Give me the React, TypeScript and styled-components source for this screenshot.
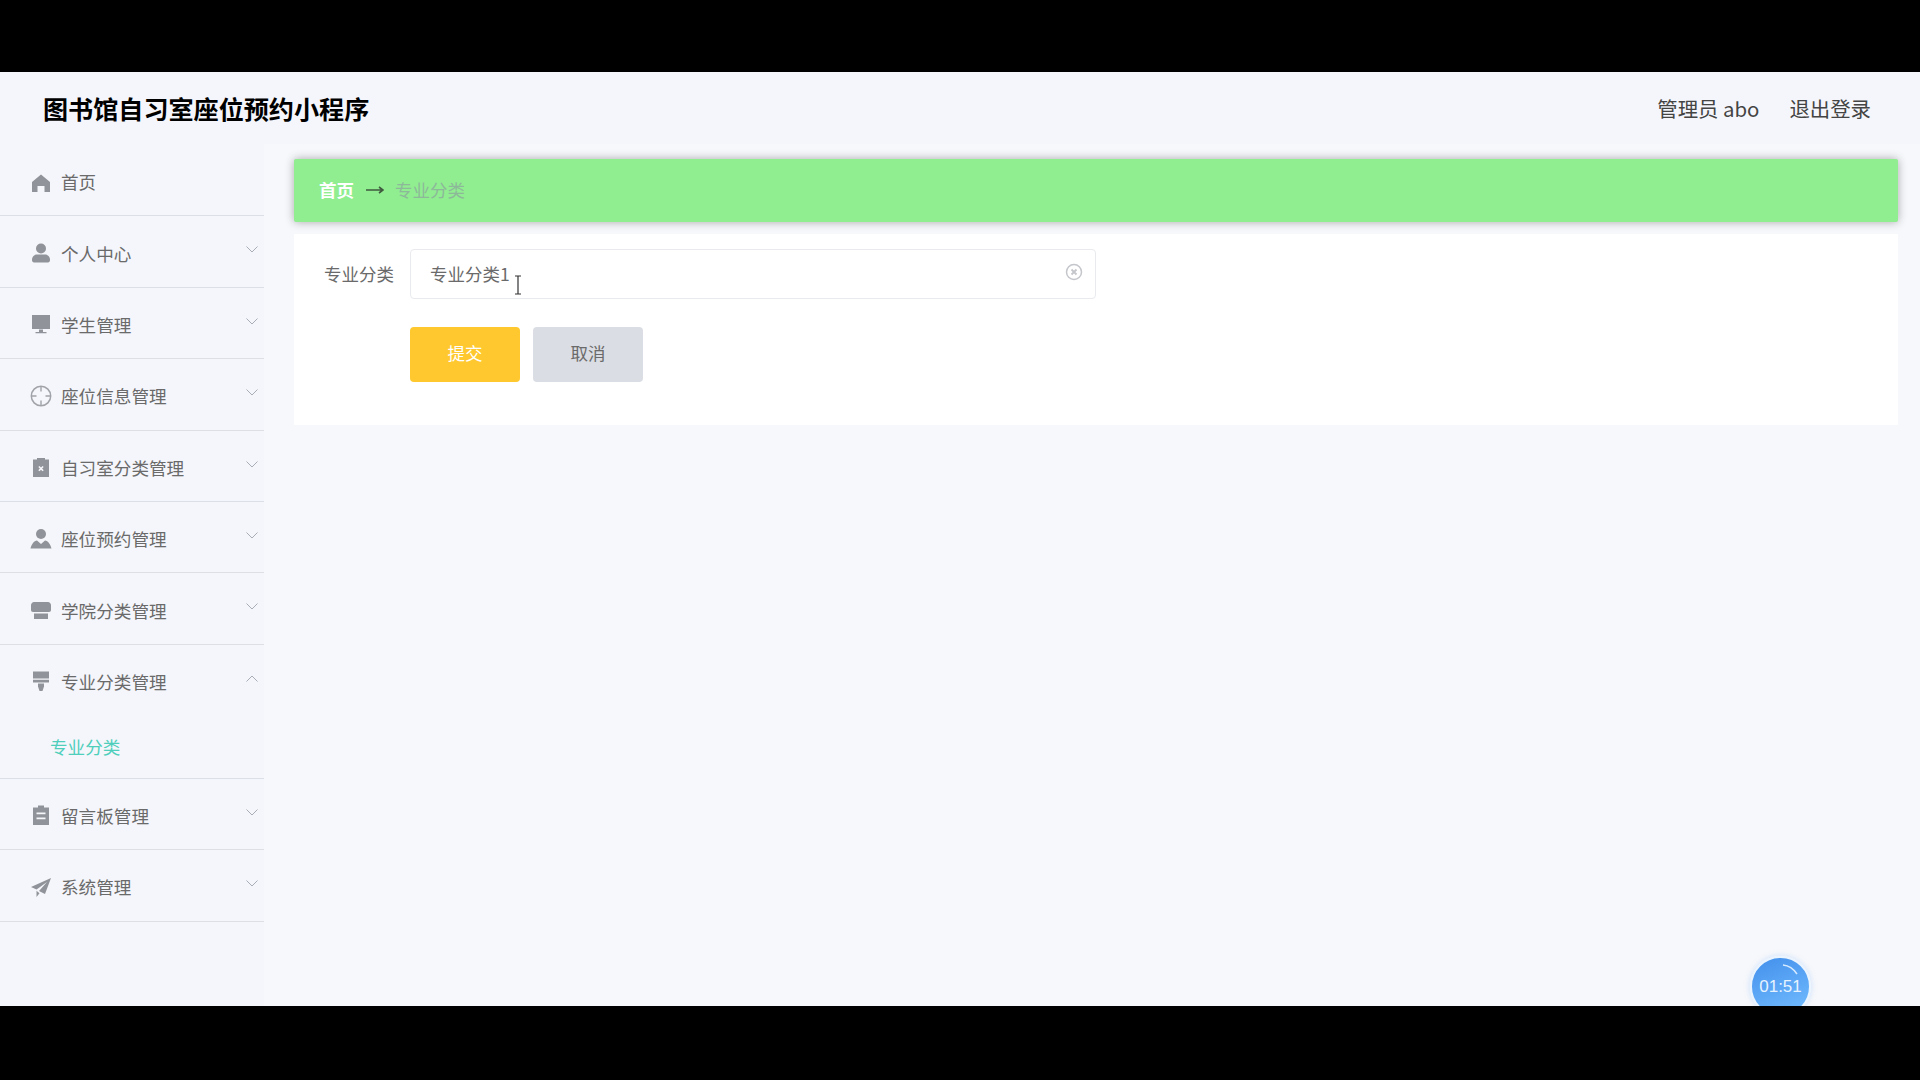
import React from "react";
import styled, { createGlobalStyle } from "styled-components";

const GlobalStyle = createGlobalStyle`
  html, body {
    margin: 0;
    padding: 0;
    background: #000;
  }
  body {
    font-family: "Noto Sans CJK SC", "Liberation Sans", sans-serif;
  }
`;

const Screen = styled.div`
  width: 1920px;
  height: 1080px;
  background: #000;
  overflow: hidden;
  display: flex;
  flex-direction: column;
  padding: 72px 0 74px;
  box-sizing: border-box;
`;

const Page = styled.div`
  position: relative;
  flex: 1;
  overflow: hidden;
  background: #f5f6fb;
`;

const Header = styled.header`
  height: 72px;
  display: flex;
  align-items: center;
  justify-content: space-between;
  padding: 0 49px 0 43px;
  box-sizing: border-box;
`;

const Title = styled.h1`
  margin: 0;
  font-size: 25.1px;
  font-weight: 700;
  color: #000;
`;

const UserBar = styled.div`
  display: flex;
  gap: 30px;
  font-size: 20.4px;
  color: #444;
`;

const Body = styled.div`
  display: flex;
  height: 862px;
`;

const Sidebar = styled.nav`
  width: 264px;
  flex: none;
  padding-top: 1px;
`;

const Row = styled.div`
  height: 71.4px;
  box-sizing: border-box;
  border-bottom: 1.5px solid #dcdfe6;
  display: flex;
  align-items: center;
  padding: 3px 0 0 30px;
  position: relative;
`;

const IconBox = styled.span`
  width: 22px;
  height: 22px;
  margin-right: 9px;
  flex: none;
  display: flex;
  align-items: center;
  justify-content: center;
  svg {
    display: block;
    width: 22px;
    height: 22px;
    fill: #909399;
  }
`;

const RowLabel = styled.span`
  font-size: 17.6px;
  color: #6a6a6a;
`;

const Chevron = styled.svg<{ $open?: boolean }>`
  position: absolute;
  right: 6px;
  top: 30px;
  width: 12px;
  height: 7px;
  fill: none;
  stroke: #a9adb5;
  stroke-width: 1;
  transform: ${(props) => (props.$open ? "rotate(180deg)" : "none")};
`;

const Group = styled.div`
  border-bottom: 1.5px solid #dcdfe6;
  height: 134px;
  box-sizing: border-box;
`;

const GroupHead = styled(Row)`
  border-bottom: none;
  height: 70px;
`;

const SubItem = styled.div`
  height: 62px;
  padding: 1px 0 0 50px;
  box-sizing: border-box;
  display: flex;
  align-items: center;
  font-size: 17.6px;
  color: #4fcfbb;
`;

const Main = styled.main`
  flex: 1;
  background: #f7f8fb;
  padding: 15px 22px 0 30px;
`;

const Crumbs = styled.div`
  height: 63px;
  background: #90ee90;
  border-radius: 2px;
  box-shadow: 0 0 10px rgba(0, 0, 0, 0.32);
  display: flex;
  align-items: center;
  padding: 0 0 2px 25px;
  box-sizing: border-box;
  font-size: 17.5px;
`;

const CrumbHome = styled.span`
  color: #fff;
  font-weight: 700;
`;

const CrumbArrow = styled.svg`
  width: 18px;
  height: 10px;
  margin: 0 11px 0 12px;
  fill: none;
  stroke: #3f5a3f;
  stroke-width: 1.6;
`;

const CrumbCurrent = styled.span`
  color: #8db89a;
`;

const Card = styled.section`
  margin-top: 12px;
  height: 191px;
  background: #fff;
  padding: 15px 30px 0;
  box-sizing: border-box;
`;

const FormRow = styled.div`
  display: flex;
  align-items: center;
`;

const FormLabel = styled.label`
  width: 86px;
  flex: none;
  padding-bottom: 1px;
  font-size: 17.5px;
  color: #6a6a6a;
`;

const Field = styled.div`
  position: relative;
  width: 686px;
  height: 50px;
`;

const FieldInput = styled.input`
  width: 100%;
  height: 100%;
  box-sizing: border-box;
  border: 1.5px solid #e8eaee;
  border-radius: 4px;
  padding: 0 40px 2px 19px;
  font-family: inherit;
  font-size: 17.5px;
  color: #6a6a6a;
  background: #fff;
  outline: none;
`;

const ClearIcon = styled.svg`
  position: absolute;
  right: 13px;
  top: 14px;
  width: 18px;
  height: 18px;
  fill: none;
  stroke: #c4c6cb;
`;

const TextCursor = styled.svg`
  position: absolute;
  left: 103px;
  top: 26px;
  width: 10px;
  height: 20px;
  fill: none;
  stroke: #333;
  stroke-width: 1.2;
`;

const Actions = styled.div`
  display: flex;
  gap: 13px;
  margin: 28px 0 0 86px;
`;

const Button = styled.button<{ $primary?: boolean }>`
  width: 110px;
  height: 55px;
  border: none;
  border-radius: 4px;
  padding: 0 0 4px;
  font-family: inherit;
  font-size: 17.5px;
  background: ${(props) => (props.$primary ? "#fec82e" : "#dadde3")};
  color: ${(props) => (props.$primary ? "#fff" : "#6a6a6a")};
`;

const Timer = styled.div`
  position: absolute;
  left: 1750px;
  top: 884px;
  width: 61px;
  height: 61px;
  box-sizing: border-box;
  border-radius: 50%;
  border: 2px solid #eaf4ff;
  background: linear-gradient(160deg, #4390ec, #74bdff);
  color: #e6f3ff;
  font-family: "Liberation Sans", sans-serif;
  font-size: 17px;
  display: flex;
  align-items: center;
  justify-content: center;
  box-shadow: 0 0 6px rgba(120, 180, 255, 0.35);
`;

const TimerGlint = styled.svg`
  position: absolute;
  left: 30px;
  top: 6px;
  width: 18px;
  height: 12px;
  fill: none;
  stroke: #d7ebff;
  stroke-width: 1.5;
`;

const HomeIcon = () => (
  <svg viewBox="0 0 22 22">
    <path d="M11 3.500 20 11v10h-5.500v-6h-7v6H2V11z" />
  </svg>
);
const UserIcon = () => (
  <svg viewBox="0 0 22 22">
    <circle cx="11" cy="6.500" r="5" />
    <path d="M2 18c0-4 3-5.500 5-5.500h8c2 0 5 1.500 5 5.500 0 1.500-.8 2.500-2 2.500H4c-1.200 0-2-1-2-2.500z" />
  </svg>
);
const MonitorIcon = () => (
  <svg viewBox="0 0 22 22">
    <path d="M2 2h18v14H2z" />
    <path d="M9 16.500h4V19h3.500v1.200h-11V19H9z" />
  </svg>
);
const HelpIcon = () => (
  <svg viewBox="0 0 22 22">
    <circle cx="11" cy="11" r="9.700" fill="none" stroke="#a0a3a9" strokeWidth="1.500" />
    <path
      d="M11 1.500v5M11 15.500v5M1.500 11h5M15.500 11h5"
      fill="none"
      stroke="#a0a3a9"
      strokeWidth="1.400"
    />
  </svg>
);
const ReleaseIcon = () => (
  <svg viewBox="0 0 22 22">
    <path
      fillRule="evenodd"
      d="M3 3.500h4V2h8v1.500h4V21H3zM8.300 11l1.100-1.100 1.600 1.600 1.600-1.600 1.100 1.100-1.600 1.600 1.600 1.600-1.100 1.100-1.600-1.600-1.600 1.600-1.100-1.100 1.600-1.600z"
    />
  </svg>
);
const CustomIcon = () => (
  <svg viewBox="0 0 22 22">
    <circle cx="11" cy="6" r="5" />
    <path d="M7 12.500 11 16l4-3.500c3 .6 5.500 3.500 6.500 8H.5c1-4.500 3.500-7.400 6.500-8z" />
  </svg>
);
const ShopIcon = () => (
  <svg viewBox="0 0 22 22">
    <path d="M4 3h14c1.500 0 3 1.500 3 3v5c0 1.200-.8 2-2 2H3c-1.200 0-2-.8-2-2V6c0-1.500 1.500-3 3-3z" />
    <path d="M4 14.500h14V20H4z" />
  </svg>
);
const BrushIcon = () => (
  <svg viewBox="0 0 22 22">
    <path d="M3 1.500h16v7H3zM3 9.800h16v2.700H3z" />
    <path d="M8 13.500h6v3l-1.500 4.500h-3L8 16.500z" />
  </svg>
);
const OrderIcon = () => (
  <svg viewBox="0 0 22 22">
    <path
      fillRule="evenodd"
      d="M3 3.500h5V1.500h6v2h5V21H3zM6.500 8.500v1.800h9V8.500zm0 5v1.800h9v-1.800z"
    />
  </svg>
);
const PromotionIcon = () => (
  <svg viewBox="0 0 22 22">
    <path d="M21 2 1 11l5.500 2.500L17 6l-8 9 6 3z" />
    <path d="M6.500 14.800V21l3-3.800z" />
  </svg>
);

const ChevronDown = ({ open }: { open?: boolean }) => (
  <Chevron viewBox="0 0 12 7" $open={open}>
    <path d="M.5.500 6 6l5.500-5.500" />
  </Chevron>
);

const menu = [
  { label: "个人中心", icon: <UserIcon /> },
  { label: "学生管理", icon: <MonitorIcon /> },
  { label: "座位信息管理", icon: <HelpIcon /> },
  { label: "自习室分类管理", icon: <ReleaseIcon /> },
  { label: "座位预约管理", icon: <CustomIcon /> },
  { label: "学院分类管理", icon: <ShopIcon /> },
];

const menuAfter = [
  { label: "留言板管理", icon: <OrderIcon /> },
  { label: "系统管理", icon: <PromotionIcon /> },
];

export default function App() {
  return (
    <Screen>
      <GlobalStyle />
      <Page>
        <Header>
          <Title>图书馆自习室座位预约小程序</Title>
          <UserBar>
            <span>管理员 abo</span>
            <span>退出登录</span>
          </UserBar>
        </Header>
        <Body>
          <Sidebar>
            <Row>
              <IconBox>
                <HomeIcon />
              </IconBox>
              <RowLabel>首页</RowLabel>
            </Row>
            {menu.map((item) => (
              <Row key={item.label}>
                <IconBox>{item.icon}</IconBox>
                <RowLabel>{item.label}</RowLabel>
                <ChevronDown />
              </Row>
            ))}
            <Group>
              <GroupHead>
                <IconBox>
                  <BrushIcon />
                </IconBox>
                <RowLabel>专业分类管理</RowLabel>
                <ChevronDown open />
              </GroupHead>
              <SubItem>专业分类</SubItem>
            </Group>
            {menuAfter.map((item) => (
              <Row key={item.label}>
                <IconBox>{item.icon}</IconBox>
                <RowLabel>{item.label}</RowLabel>
                <ChevronDown />
              </Row>
            ))}
          </Sidebar>
          <Main>
            <Crumbs>
              <CrumbHome>首页</CrumbHome>
              <CrumbArrow viewBox="0 0 18 10">
                <path d="M0 5h17M13 2l4 3-4 3" />
              </CrumbArrow>
              <CrumbCurrent>专业分类</CrumbCurrent>
            </Crumbs>
            <Card>
              <FormRow>
                <FormLabel>专业分类</FormLabel>
                <Field>
                  <FieldInput readOnly value="专业分类1" />
                  <ClearIcon viewBox="0 0 18 18">
                    <circle cx="9" cy="9" r="7.500" strokeWidth="1.500" />
                    <path d="M6.500 6.500l5 5M11.500 6.500l-5 5" strokeWidth="1.800" />
                  </ClearIcon>
                  <TextCursor viewBox="0 0 10 20">
                    <path d="M2 1h6M5 1v18M2 19h6" />
                  </TextCursor>
                </Field>
              </FormRow>
              <Actions>
                <Button $primary>提交</Button>
                <Button>取消</Button>
              </Actions>
            </Card>
          </Main>
        </Body>
        <Timer>
          01:51
          <TimerGlint viewBox="0 0 18 12">
            <path d="M1 1c5 .5 10 3 14 9" />
          </TimerGlint>
        </Timer>
      </Page>
    </Screen>
  );
}
